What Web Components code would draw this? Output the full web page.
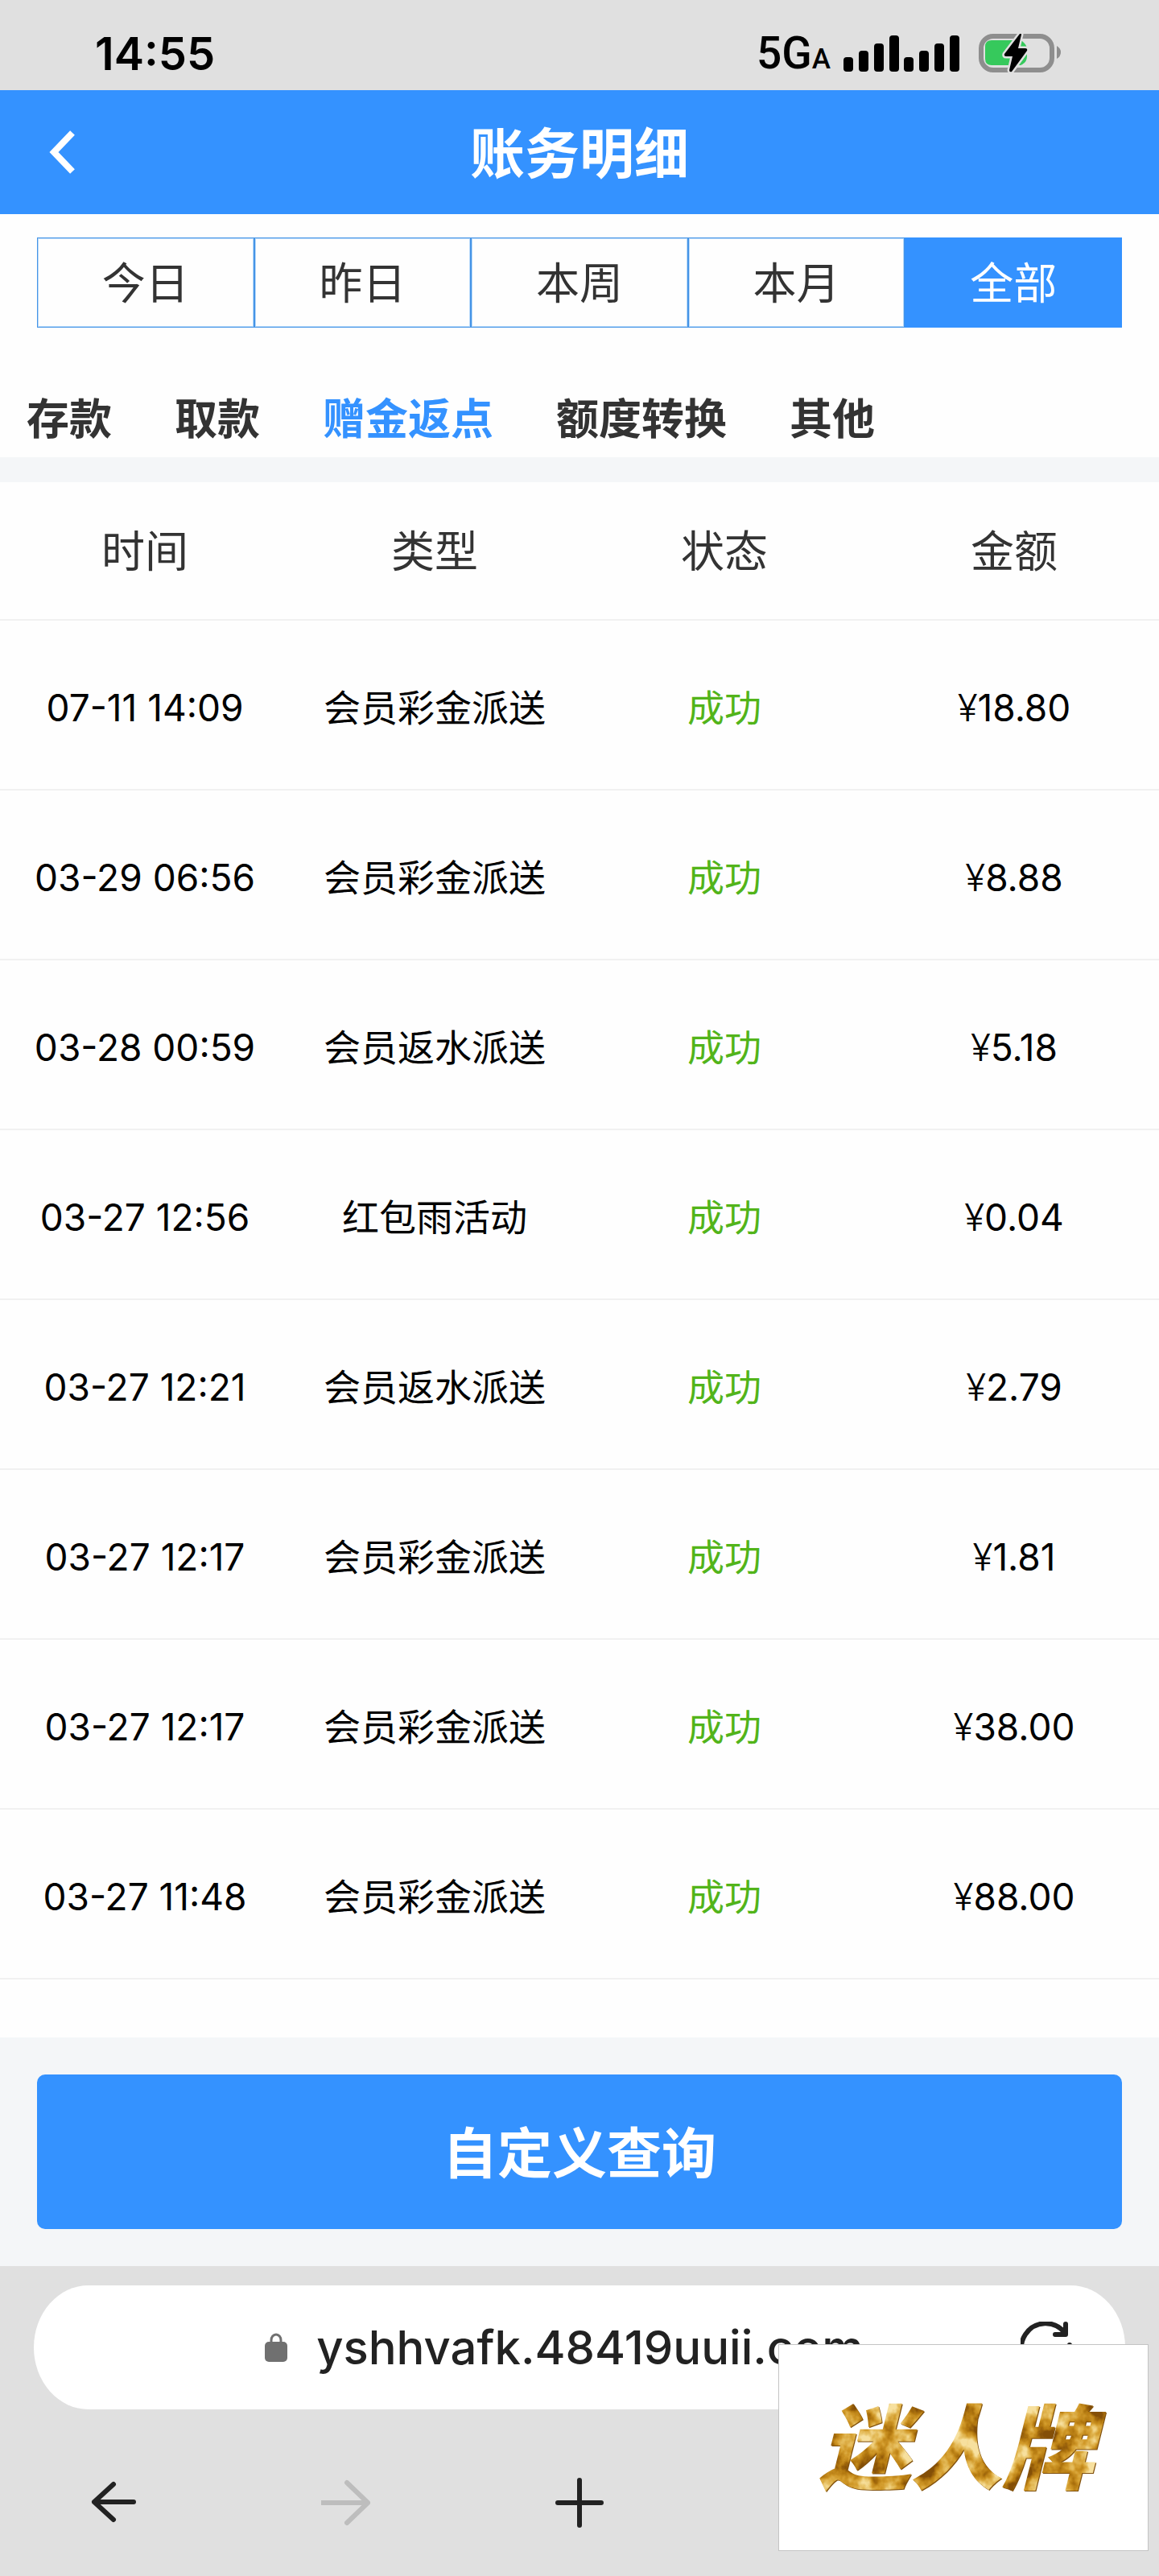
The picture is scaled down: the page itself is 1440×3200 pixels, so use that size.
<!DOCTYPE html>
<html lang="zh-CN">
<head>
<meta charset="UTF-8">
<meta name="viewport" content="width=device-width, initial-scale=1.0">
<title>账务明细</title>
<style>
    :root{
        --blue: #3492ff;
        --ink: #333;
        --band: #f4f6f8;
        --chrome: #e0e0e0;
        --sheet: #fefefe;
    }

    body{
        margin: 0;
        background: var(--sheet);
        font-family: Inter, "Noto Sans CJK SC", sans-serif;
    }
</style>
</head>
<body>
<account-page>
    <status-bar slot="top" time="14:55"></status-bar>
    <page-header slot="top">账务明细</page-header>
    <range-tabs slot="top" items="今日,昨日,本周,本月,全部" active="全部"></range-tabs>
    <category-tabs slot="top" items="存款,取款,赠金返点,额度转换,其他" active="赠金返点"></category-tabs>
    <record-table></record-table>
    <query-bar slot="bottom">自定义查询</query-bar>
    <browser-bar slot="bottom">
        yshhvafk.48419uuii.com
        <brand-mark slot="over">迷人牌</brand-mark>
    </browser-bar>
</account-page>

<script>
// page frame: top bars, list that takes the free height, bottom bars
class AccountPage extends HTMLElement{
    constructor(){
        super();
        this.attachShadow({mode: 'open'});
        this.shadowRoot.innerHTML = `
        <style>
            :host{
                display: flex;
                flex-direction: column;
                min-height: 100vh;
            }
            main{
                flex: 1;
            }
        </style>
        <slot name="top"></slot>
        <main><slot></slot></main>
        <slot name="bottom"></slot>`;
    }
}

class StatusBar extends HTMLElement{
    constructor(){
        super();
        this.attachShadow({mode: 'open'});
        this.shadowRoot.innerHTML = `
        <style>
            :host{
                display: flex;
                justify-content: space-between;
                align-items: center;
                height: 112px;
                padding: 22px 120px 0 118px;
                box-sizing: border-box;
                background: var(--chrome);
                color: #000;
            }
            time{
                font-size: 56px;
                font-weight: 600;
                line-height: 64px;
            }
            .icons{
                display: flex;
                align-items: center;
            }
            .net{
                padding-top: 6px;
                margin-right: 16px;
                font: 500 55px/64px Roboto, sans-serif;
            }
            .net small{
                font-size: 35px;
            }
            svg{
                display: block;
            }
            .signal{
                margin-right: 22px;
            }
        </style>
        <time>${this.getAttribute('time')}</time>
        <div class="icons">
            <span class="net">5G<small>A</small></span>
            <svg class="signal" width="146" height="50" viewBox="0 0 146 50">
                <rect x="0" y="29" width="12" height="18" rx="4"/>
                <rect x="19" y="21" width="12" height="26" rx="4"/>
                <rect x="38" y="12" width="12" height="35" rx="4"/>
                <rect x="57" y="2" width="12" height="45" rx="4"/>
                <rect x="75" y="29" width="12" height="18" rx="4"/>
                <rect x="94" y="21" width="12" height="26" rx="4"/>
                <rect x="113" y="12" width="12" height="35" rx="4"/>
                <rect x="132" y="2" width="12" height="45" rx="4"/>
            </svg>
            <svg width="104" height="50" viewBox="0 0 104 50">
                <rect x="3" y="3" width="88" height="42" rx="15" fill="none" stroke="#8e8e8e" stroke-width="6"/>
                <path d="M97 15 Q102 18 102 23 Q102 28 97 31z" fill="#8e8e8e"/>
                <path d="M16 8h36q8 4 8 12v8q0 8-8 11H16q-8 0-8-8V16q0-8 8-8z" fill="#36c95c"/>
                <path d="M51 0 32 25q-1 3 2 3h8l-4 17q0 3 3 2l19-26q1-3-2-3h-9l4-17q0-3-2-1z" fill="#000" stroke="#e0e0e0" stroke-width="5" paint-order="stroke" stroke-linejoin="round"/>
            </svg>
        </div>`;
    }
}

class PageHeader extends HTMLElement{
    constructor(){
        super();
        this.attachShadow({mode: 'open'});
        this.shadowRoot.innerHTML = `
        <style>
            :host{
                display: grid;
                grid-template-columns: 1fr auto 1fr;
                align-items: center;
                height: 154px;
                background: var(--blue);
                color: #fff;
            }
            button{
                justify-self: start;
                margin-left: 48px;
                padding: 0;
                border: 0;
                background: none;
                color: inherit;
            }
            svg{
                display: block;
            }
            h1{
                margin: 0;
                padding-top: 4px;
                font-size: 68px;
                font-weight: 700;
                line-height: 80px;
            }
        </style>
        <button aria-label="返回">
            <svg width="60" height="60" viewBox="0 0 60 60" fill="none" stroke="currentColor" stroke-width="8">
                <path d="M42 6 19 30 42 54"/>
            </svg>
        </button>
        <h1><slot></slot></h1>`;
    }
}

// both tab strips share the way they read their items
class TabStrip extends HTMLElement{
    constructor(){
        super();
        this.attachShadow({mode: 'open'});
        const active = this.getAttribute('active');
        const buttons = this.getAttribute('items').split(',').map(name =>
            `<button role="tab" aria-selected="${name === active}">${name}</button>`
        ).join('');
        this.shadowRoot.innerHTML = `<style>
            button{
                margin: 0;
                font-family: inherit;
                font-size: 54px;
                line-height: 64px;
                color: var(--ink);
                background: none;
                white-space: nowrap;
            }
            ${this.styles}
        </style>${buttons}`;
        this.shadowRoot.addEventListener('click', this._select.bind(this));
    }

    _select(event){
        if(event.target.localName !== 'button') return;
        this.shadowRoot.querySelectorAll('button').forEach(button => {
            button.setAttribute('aria-selected', button === event.target);
        });
    }
}

class RangeTabs extends TabStrip{
    get styles(){
        return `
            :host{
                display: flex;
                padding: 29px 46px 0;
            }
            button{
                flex: 1;
                height: 112px;
                padding: 4px 0 0;
                border: 1px solid #4594e6;
                box-shadow: inset 0 0 0 1px #b9dafa;
            }
            button[aria-selected="true"]{
                background: var(--blue);
                border-color: var(--blue);
                box-shadow: none;
                color: #fff;
            }`;
    }
}

class CategoryTabs extends TabStrip{
    get styles(){
        return `
            :host{
                display: flex;
                gap: 78px;
                padding: 82px 33px 15px;
                border-bottom: 31px solid var(--band);
            }
            button{
                padding: 0;
                border: 0;
                font-size: 53px;
                font-weight: 700;
            }
            button[aria-selected="true"]{
                color: var(--blue);
            }`;
    }
}

const records = [
    ['07-11 14:09', '会员彩金派送', '成功', '18.80'],
    ['03-29 06:56', '会员彩金派送', '成功', '8.88'],
    ['03-28 00:59', '会员返水派送', '成功', '5.18'],
    ['03-27 12:56', '红包雨活动', '成功', '0.04'],
    ['03-27 12:21', '会员返水派送', '成功', '2.79'],
    ['03-27 12:17', '会员彩金派送', '成功', '1.81'],
    ['03-27 12:17', '会员彩金派送', '成功', '38.00'],
    ['03-27 11:48', '会员彩金派送', '成功', '88.00']
];

class RecordTable extends HTMLElement{
    constructor(){
        super();
        this.attachShadow({mode: 'open'});
        const rows = records.map(([time, type, state, amount]) => `
            <tr><td>${time}</td><td>${type}</td><td class="ok">${state}</td><td><span>¥</span>${amount}</td></tr>`
        ).join('');
        this.shadowRoot.innerHTML = `
        <style>
            :host{
                display: block;
            }
            table{
                width: 100%;
                table-layout: fixed;
                border-collapse: separate;
                border-spacing: 0;
                text-align: center;
                line-height: 64px;
            }
            th, td{
                padding: 0;
                box-sizing: border-box;
                border-bottom: 2px solid #f1f1f1;
                white-space: nowrap;
            }
            th{
                height: 172px;
                padding-top: 4px;
                font-size: 54px;
                font-weight: 400;
                color: var(--ink);
            }
            td{
                height: 211px;
                padding-top: 6px;
                font-size: 46px;
                color: #000;
            }
            td span{
                font-weight: 300;
            }
            .ok{
                color: #52b41a;
            }
        </style>
        <table>
            <thead><tr><th>时间</th><th>类型</th><th>状态</th><th>金额</th></tr></thead>
            <tbody>${rows}</tbody>
        </table>`;
    }
}

class QueryBar extends HTMLElement{
    constructor(){
        super();
        this.attachShadow({mode: 'open'});
        this.shadowRoot.innerHTML = `
        <style>
            :host{
                display: block;
                padding: 46px;
                background: var(--band);
            }
            button{
                display: block;
                width: 100%;
                height: 192px;
                padding: 4px 0 0;
                border: 0;
                border-radius: 10px;
                background: var(--blue);
                color: #fff;
                font-family: inherit;
                font-size: 68px;
                font-weight: 700;
                line-height: 80px;
            }
        </style>
        <button><slot></slot></button>`;
    }
}

class BrowserBar extends HTMLElement{
    constructor(){
        super();
        this.attachShadow({mode: 'open'});
        this.shadowRoot.innerHTML = `
        <style>
            :host{
                display: block;
                position: relative;
                padding: 24px 42px 60px;
                background: var(--chrome);
                color: #222;
            }
            button{
                padding: 0;
                border: 0;
                background: none;
                color: inherit;
                font-family: inherit;
            }
            button:disabled{
                color: #bdbdbd;
            }
            svg{
                display: block;
            }
            .pill{
                display: flex;
                align-items: center;
                height: 154px;
                padding: 0 66px 0 92px;
                border-radius: 68px / 77px;
                background: #fff;
            }
            .address{
                flex: 1;
                display: flex;
                justify-content: center;
                align-items: center;
                gap: 36px;
                font-size: 58px;
                font-weight: 500;
                line-height: 72px;
            }
            nav{
                display: flex;
                justify-content: space-between;
                padding: 83px 67px 0;
            }
            nav svg, .reload svg{
                fill: none;
                stroke: currentColor;
                stroke-width: 6;
                stroke-linecap: round;
                stroke-linejoin: round;
            }
        </style>
        <div class="pill">
            <button class="address">
                <svg width="28" height="36" viewBox="0 0 28 36">
                    <path d="M8 14V9a6 7 0 0 1 12 0v5" fill="none" stroke="#707070" stroke-width="3"/>
                    <rect x="0" y="11" width="28" height="25" rx="5" fill="#707070"/>
                </svg>
                <span><slot></slot></span>
            </button>
            <button class="reload" aria-label="刷新">
                <svg width="64" height="64" viewBox="0 0 64 64">
                    <path d="M61 29A30 30 0 1 1 55 14M56 3V16H43"/>
                </svg>
            </button>
        </div>
        <nav>
            <button aria-label="后退">
                <svg width="64" height="64" viewBox="0 0 64 64"><path d="M57 32H8M32 10 8 32 32 54"/></svg>
            </button>
            <button aria-label="前进" disabled>
                <svg width="64" height="64" viewBox="0 0 64 64"><path d="M1 33H58M32 8 58 33 32 58"/></svg>
            </button>
            <button aria-label="新建标签页">
                <svg width="64" height="64" viewBox="0 0 64 64"><path d="M5 33H59M32 5V61"/></svg>
            </button>
            <button aria-label="标签页">
                <svg width="64" height="64" viewBox="0 0 64 64"><rect x="8" y="8" width="48" height="48" rx="10"/></svg>
            </button>
            <button aria-label="菜单">
                <svg width="64" height="64" viewBox="0 0 64 64"><path d="M8 14H56M8 32H56M8 50H56"/></svg>
            </button>
        </nav>
        <slot name="over"></slot>`;
    }
}

// gold lettering on a white card that lies over the bottom bar
class BrandMark extends HTMLElement{
    constructor(){
        super();
        this.attachShadow({mode: 'open'});
        this.shadowRoot.innerHTML = `
        <style>
            :host{
                position: absolute;
                right: 13px;
                bottom: 31px;
                width: 460px;
                height: 257px;
                box-sizing: border-box;
                border: 1px solid #c4c4c4;
                background: #fff;
            }
            svg{
                display: block;
            }
            text{
                font-family: "Noto Sans CJK SC", sans-serif;
                font-size: 114px;
                font-weight: 900;
                font-style: italic;
            }
        </style>
        <svg width="458" height="255" viewBox="0 0 458 255">
            <defs>
                <filter id="gold" x="0" y="0" width="100%" height="100%" color-interpolation-filters="sRGB">
                    <feTurbulence type="fractalNoise" baseFrequency="0.035 0.03" numOctaves="4" seed="7" result="noise"/>
                    <feColorMatrix in="noise" type="matrix" values="2.4 0 0 0 -0.7  2.4 0 0 0 -0.7  2.4 0 0 0 -0.7  0 0 0 0 1" result="tone"/>
                    <feComponentTransfer in="tone" result="foil">
                        <feFuncR type="table" tableValues="0.52 0.7 0.82 0.9 0.97"/>
                        <feFuncG type="table" tableValues="0.31 0.47 0.6 0.74 0.88"/>
                        <feFuncB type="table" tableValues="0.03 0.06 0.16 0.36 0.62"/>
                    </feComponentTransfer>
                    <feComposite in="foil" in2="SourceAlpha" operator="in" result="face"/>
                    <feOffset in="SourceAlpha" dx="1" dy="1" result="edge"/>
                    <feFlood flood-color="#80500c"/>
                    <feComposite in2="edge" operator="in" result="rim"/>
                    <feMerge>
                        <feMergeNode in="rim"/>
                        <feMergeNode in="face"/>
                    </feMerge>
                </filter>
            </defs>
            <text x="220" y="170" text-anchor="middle" filter="url(#gold)">${this.textContent}</text>
        </svg>`;
    }
}

customElements.define('account-page', AccountPage);
customElements.define('status-bar', StatusBar);
customElements.define('page-header', PageHeader);
customElements.define('range-tabs', RangeTabs);
customElements.define('category-tabs', CategoryTabs);
customElements.define('record-table', RecordTable);
customElements.define('query-bar', QueryBar);
customElements.define('browser-bar', BrowserBar);
customElements.define('brand-mark', BrandMark);
</script>
</body>
</html>
